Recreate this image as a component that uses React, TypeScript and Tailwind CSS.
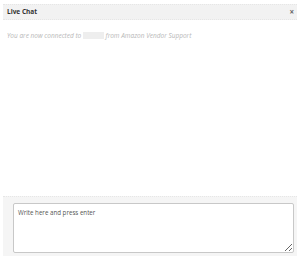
export default function App() {
  return (
    <div
      className="flex h-[258px] w-[300px] flex-col bg-white px-[3px] pt-[4px]"
      style={{ fontFamily: '"Open Sans", "Liberation Sans", sans-serif' }}
    >
      <div className="flex h-[16px] items-center justify-between border-y border-dotted border-[#e6e6e6] bg-[#f2f2f2] pl-[4px] pr-[3px]">
        <span className="text-[6.5px] font-bold text-[#333]">Live Chat</span>
        <span className="text-[8px] font-bold leading-none text-[#666]">×</span>
      </div>

      <p className="mt-[11px] pl-[4px] text-[6.5px] italic text-[#b8b8b8]">
        You are now connected to{' '}
        <span className="inline-block h-[7px] w-[21px] translate-y-[1px] bg-[#eee]" />{' '}
        from Amazon Vendor Support
      </p>

      <div className="flex-1" />

      <div className="mb-[2px] border-t border-dotted border-[#e6e6e6] bg-[#f5f5f5] pb-[3px] pl-[10px] pr-[3px] pt-[6px]">
        <textarea
          placeholder="Write here and press enter"
          className="block h-[50px] w-full resize-y rounded-[2px] border border-[#c8c8c8] bg-white px-[4px] py-[4px] text-[6.2px] text-[#555] placeholder:text-[#555] focus:outline-none"
        />
      </div>
    </div>
  )
}
